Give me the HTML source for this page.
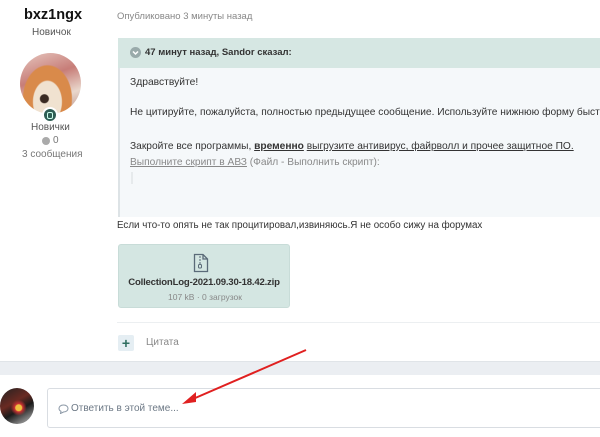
<!DOCTYPE html>
<html><head><meta charset="utf-8"><style>
*{margin:0;padding:0;box-sizing:border-box}
html,body{width:600px;height:437px;overflow:hidden}
body{background:#fff;font-family:"Liberation Sans","DejaVu Sans",sans-serif;position:relative;color:#333}
#w{position:absolute;left:0;top:0;width:600px;height:437px;overflow:hidden}
.a{position:absolute;white-space:nowrap}
</style></head><body><div id="w">
<div class="a" style="left:24px;top:7px;font-size:14.5px;font-weight:bold;color:#111">bxz1ngx</div>
<div class="a" style="left:32px;top:27px;font-size:10px;color:#555">Новичок</div>
<div class="a" style="left:20px;top:53px;width:61px;height:61px;border-radius:50%;background:radial-gradient(circle at 40% 75%,#3a2a22 0 4px,transparent 5px),radial-gradient(ellipse at 45% 80%,#f0e2d0 0 14px,transparent 15px),radial-gradient(ellipse at 45% 75%,#d98a4a 0 24px,transparent 25px),linear-gradient(160deg,#e7c8c0,#c77d78 40%,#e9d7cc 70%,#b98f86)"></div>
<div class="a" style="left:42px;top:107px;width:16px;height:16px;border-radius:50%;background:#2f5e54;border:2px solid #fff"><div style="position:absolute;left:3px;top:3px;width:6px;height:7px;border:1px solid #cfe;border-radius:2px"></div></div>
<div class="a" style="left:31px;top:122px;font-size:10px;color:#555">Новички</div>
<div class="a" style="left:42px;top:137px;width:8px;height:8px;border-radius:50%;background:#aaa"></div>
<div class="a" style="left:53px;top:135px;font-size:10px;color:#777">0</div>
<div class="a" style="left:22px;top:149px;font-size:10px;color:#777">3 сообщения</div>

<div class="a" style="left:117px;top:11px;font-size:9.5px;color:#888">Опубликовано 3 минуты назад</div>

<div class="a" style="left:118px;top:38px;width:482px;height:179px;background:#f5f8fa;border-left:2px solid #dde3e6"></div>
<div class="a" style="left:118px;top:38px;width:482px;height:30px;background:#d6e7e3"></div>
<div class="a" style="left:130px;top:47px;width:11px;height:11px;border-radius:50%;background:#9aa"><svg width="11" height="11" style="position:absolute;left:0;top:0"><path d="M3 4.5 L5.5 7 L8 4.5" stroke="#fff" stroke-width="1.5" fill="none"/></svg></div>
<div class="a" style="left:145px;top:47px;font-size:9.5px;font-weight:bold;color:#333">47 минут назад, Sandor сказал:</div>
<div class="a" style="left:130px;top:77px;font-size:10.3px;color:#333">Здравствуйте!</div>
<div class="a" style="left:130px;top:107px;font-size:10.2px;color:#333">Не цитируйте, пожалуйста, полностью предыдущее сообщение. Используйте нижнюю форму быстрого</div>
<div class="a" style="left:130px;top:141px;font-size:10.2px;color:#333">Закройте все программы, <b style="text-decoration:underline">временно</b> <span style="text-decoration:underline">выгрузите антивирус, файрволл и прочее защитное ПО.</span></div>
<div class="a" style="left:130px;top:157px;font-size:10.2px;color:#888"><span style="text-decoration:underline">Выполните скрипт в АВЗ</span> (Файл - Выполнить скрипт):</div>
<div class="a" style="left:131px;top:172px;width:2px;height:12px;background:#e6eaec"></div>

<div class="a" style="left:117px;top:220px;font-size:9.8px;color:#333">Если что-то опять не так процитировал,извиняюсь.Я не особо сижу на форумах</div>

<div class="a" style="left:118px;top:244px;width:172px;height:64px;background:#d4e6e2;border-radius:3px;border:1px solid #c8dcd8"></div>
<svg class="a" style="left:193px;top:253px" width="16" height="20"><path d="M1.5 1.5 H10 L14.5 6 V18.5 H1.5 Z M10 1.5 V6 H14.5" fill="none" stroke="#5a6a78" stroke-width="1.3"/><path d="M7 3 v2 M7 6 v2 M7 9 v2" stroke="#5a6a78" stroke-width="1"/><rect x="5.5" y="11.5" width="3" height="3.5" rx="1" fill="none" stroke="#5a6a78"/></svg>
<div class="a" style="left:126px;top:277px;width:156px;text-align:center;font-size:9.6px;font-weight:bold;color:#333;letter-spacing:-0.2px">CollectionLog-2021.09.30-18.42.zip</div>
<div class="a" style="left:168px;top:292px;font-size:8.5px;color:#888">107 kB · 0 загрузок</div>

<div class="a" style="left:117px;top:322px;width:483px;height:1px;background:#eceff1"></div>
<div class="a" style="left:118px;top:335px;width:16px;height:16px;background:#e5eef3;border-radius:2px;color:#2f6e60;font-weight:bold;font-size:14px;line-height:16px;text-align:center">+</div>
<div class="a" style="left:146px;top:337px;font-size:10px;color:#888">Цитата</div>

<div class="a" style="left:0;top:361px;width:600px;height:14px;background:#ebeef2;border-top:1px solid #e0e4e8"></div>
<div class="a" style="left:0;top:388px;width:34px;height:36px;border-radius:50%;background:radial-gradient(circle at 55% 55%,#f0c040 0 3px,#c33 4px,transparent 8px),linear-gradient(150deg,#222,#6a2a22 40%,#1a1a1a 60%,#888 85%,#222)"></div>
<div class="a" style="left:47px;top:388px;width:556px;height:40px;border:1px solid #d9dde2;border-radius:3px;background:#fff"></div>
<svg class="a" style="left:58px;top:404px" width="11" height="10"><path d="M5.5 1 C8.5 1 10 2.7 10 4.5 C10 6.3 8.5 8 5.5 8 L2.5 9.5 L3 7.3 C1.6 6.6 1 5.6 1 4.5 C1 2.7 2.5 1 5.5 1Z" fill="none" stroke="#8a97a5"/></svg>
<div class="a" style="left:71px;top:403px;font-size:10px;color:#6c7885">Ответить в этой теме...</div>
<svg class="a" style="left:0;top:0" width="600" height="437"><path d="M306 350 L186 402" stroke="#e02020" stroke-width="2"/><path d="M182 404 L196 392 L196 402 Z" fill="#e02020"/></svg>
</div></body></html>
